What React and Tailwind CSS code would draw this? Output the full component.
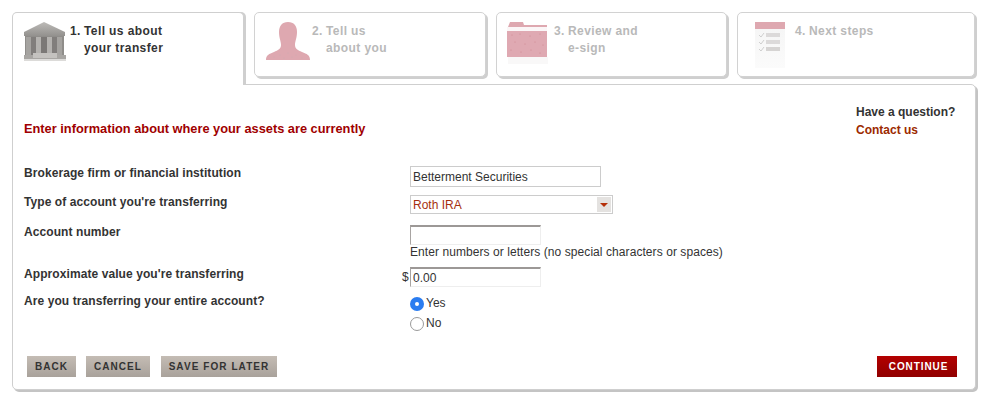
const Bank = () => (
  <svg width="44" height="40" viewBox="0 0 44 40" className="shrink-0 blur-[0.4px]">
    <defs>
      <linearGradient id="roof" x1="0" y1="0" x2="0" y2="1"><stop offset="0" stopColor="#bdbbb8" /><stop offset="1" stopColor="#93918e" /></linearGradient>
    </defs>
    <path d="M1 10 L21 0 L42 10 L42 14 L1 14 Z" fill="url(#roof)" />
    <rect x="2" y="14" width="39" height="22" fill="#8f8d8a" />
    <rect x="3" y="15" width="5" height="18" fill="#a5a3a0" />
    <rect x="13" y="15" width="5" height="18" fill="#b4b2af" />
    <rect x="24" y="15" width="5" height="18" fill="#b4b2af" />
    <rect x="34" y="15" width="5" height="18" fill="#a5a3a0" />
    <rect x="8" y="15" width="5" height="18" fill="#817e7c" />
    <rect x="18" y="15" width="6" height="18" fill="#7b7876" />
    <rect x="29" y="15" width="5" height="18" fill="#817e7c" />
    <rect x="1" y="33" width="42" height="4" fill="#a8a6a3" />
    <rect x="10" y="31" width="24" height="5" fill="#c4c2bf" />
    <rect x="1" y="37" width="42" height="2" fill="#dcdbd9" />
  </svg>
);
const Person = () => (
  <svg width="44" height="40" viewBox="0 0 44 40" className="shrink-0">
    <path d="M22 0 C16 0 13 4 13 10 C13 16 15 19 15 23 C15 27 12 28 8 30 C3 32 0 33 0 38 L44 38 C44 33 41 32 36 30 C32 28 29 27 29 23 C29 19 31 16 31 10 C31 4 28 0 22 0 Z" fill="#dea8b0" />
    <g fill="#c9adb0">
      <circle cx="14" cy="33" r="0.5" /><circle cx="22" cy="31" r="0.5" /><circle cx="30" cy="33" r="0.5" /><circle cx="8" cy="35" r="0.5" />
      <circle cx="18" cy="36" r="0.5" /><circle cx="26" cy="35" r="0.5" /><circle cx="36" cy="36" r="0.5" />
    </g>
  </svg>
);
const Folder = () => (
  <svg width="44" height="44" viewBox="0 0 44 44" className="shrink-0">
    <path d="M2 5 L4 0 L17 0 L18 3 L41 3 L41 5 Z" fill="#dea8b0" />
    <rect x="1" y="5" width="40" height="4" fill="#fbf6f7" />
    <rect x="1" y="9" width="40" height="26" fill="#dfa9b2" />
    <rect x="2" y="35" width="40" height="7" fill="#f9f8f8" />
    <g fill="#c97f88">
      <circle cx="6" cy="13" r="0.5" /><circle cx="14" cy="12" r="0.5" /><circle cx="24" cy="14" r="0.5" /><circle cx="34" cy="12" r="0.5" />
      <circle cx="9" cy="20" r="0.5" /><circle cx="19" cy="22" r="0.5" /><circle cx="29" cy="20" r="0.5" /><circle cx="37" cy="23" r="0.5" />
      <circle cx="5" cy="28" r="0.5" /><circle cx="15" cy="30" r="0.5" /><circle cx="25" cy="28" r="0.5" /><circle cx="34" cy="31" r="0.5" />
    </g>
  </svg>
);
const List = () => (
  <svg width="32" height="46" viewBox="0 0 32 46" className="shrink-0">
    <defs>
      <linearGradient id="page" x1="0" y1="0" x2="0" y2="1"><stop offset="0" stopColor="#f5f5f5" /><stop offset="1" stopColor="#fbfbfb" /></linearGradient>
    </defs>
    <rect x="1" y="0" width="30" height="46" fill="url(#page)" />
    <rect x="1" y="0" width="30" height="7" fill="#dea8b0" />
    <path d="M5 13 l2 2 l3 -4 M5 20 l2 2 l3 -4 M5 27 l2 2 l3 -4" stroke="#cfcfcf" strokeWidth="1" fill="none" />
    <rect x="12" y="11" width="14" height="4" fill="#dcdada" />
    <rect x="12" y="18" width="14" height="4" fill="#dcdada" />
    <rect x="12" y="25" width="14" height="4" fill="#d6d4d3" />
  </svg>
);

const Tab = ({ icon, num, line1, line2, className, gap, pl }) => (
  <div className={`h-[65px] rounded-[5px] border border-[#d2d2d2] bg-white shadow-[2px_2px_0_#cfcfcf] flex items-start pt-[9px] ${pl} ${className}`}>
    {icon}
    <div className={`mt-[1px] text-[12px] leading-[17px] font-bold text-[#b9b9b9] tracking-[0.4px] ${gap}`}>
      <div className="flex"><span className="w-[14px]">{num}.</span><span>{line1}</span></div>
      {line2 && <div className="pl-[14px]">{line2}</div>}
    </div>
  </div>
);

const Label = ({ children }) => (
  <label className="block text-[12px] font-bold leading-[14px] text-[#333] tracking-[0.08px]">{children}</label>
);

const Btn = ({ children, className }) => (
  <button className={`h-[21px] bg-gradient-to-b from-[#c4bcb4] to-[#a9a29b] text-[10px] font-bold tracking-[1.07px] text-[#333] ${className}`}>{children}</button>
);

export default function App() {
  return (
    <div className="w-[988px] h-[400px] bg-white pl-[12px] pt-[12px] font-['Liberation_Sans',Arial,sans-serif] overflow-hidden">
      <div className="flex items-start gap-[10px] h-[72px]">
        <div className="relative z-10 w-[232px] h-[73px] rounded-t-[5px] border border-b-0 border-[#cfcfcf] bg-white shadow-[2px_0_0_#cfcfcf] flex items-start pl-[10px] pt-[9px]">
          <Bank />
          <div className="ml-[3px] mt-[1px] text-[12px] leading-[17px] font-bold text-[#333] tracking-[0.4px]">
            <div className="flex"><span className="w-[14px]">1.</span><span>Tell us about</span></div>
            <div className="pl-[14px]">your transfer</div>
          </div>
        </div>
        <Tab icon={<Person />} num="2" line1="Tell us" line2="about you" className="w-[232px]" pl="pl-[11px]" gap="ml-[2px]" />
        <Tab icon={<Folder />} num="3" line1="Review and" line2="e-sign" className="w-[231px]" pl="pl-[9px]" gap="ml-[4px]" />
        <Tab icon={<List />} num="4" line1="Next steps" className="w-[238px]" pl="pl-[16px]" gap="ml-[9px]" />
      </div>
      <div className="w-[964px] h-[306px] rounded-[5px] rounded-tl-none border border-[#cfcfcf] bg-white shadow-[2px_2px_0_#c4c4c4] pl-[11px] pr-[18px] flex flex-col">
        <div className="flex justify-between h-[70px]">
          <h2 className="mt-[37px] text-[12.8px] font-bold leading-[14px] text-[#a00000]">Enter information about where your assets are currently</h2>
          <div className="mt-[19px] text-[12px] font-bold leading-[16px] w-[101px] whitespace-nowrap">
            <div className="text-[#333]">Have a question?</div>
            <a className="block mt-[2px] text-[#9c2a00]">Contact us</a>
          </div>
        </div>
        <div className="grid grid-cols-[386px_1fr] text-[12px] text-[#333]">
          <div className="pt-[11px] h-[33px]"><Label>Brokerage firm or financial institution</Label></div>
          <div className="pt-[11px] h-[33px]">
            <input readOnly value="Betterment Securities" className="block w-[191px] h-[21px] border border-[#ccc] px-[2px] text-[12px] text-[#333] outline-none" />
          </div>
          <div className="pt-[7px] h-[30px]"><Label>Type of account you're transferring</Label></div>
          <div className="pt-[7px] h-[30px]">
            <div className="w-[203px] h-[19px] border border-[#ccc] flex items-center justify-between pl-[2px] pr-[1px] text-[#a5300f]">
              <span>Roth IRA</span>
              <span className="w-[14px] h-[15px] bg-[#e4e2e0] flex items-center justify-center">
                <span className="w-0 h-0 border-x-[4px] border-x-transparent border-t-[4px] border-t-[#b5300a]"></span>
              </span>
            </div>
          </div>
          <div className="pt-[7px] h-[44px]"><Label>Account number</Label></div>
          <div className="pt-[7px] h-[44px]">
            <input readOnly className="block w-[131px] h-[20px] border border-[#eee] border-t-[#9c9896] border-l-[#a8a4a2] border-t-2 outline-none" />
            <div className="text-[12px] leading-[14px] whitespace-nowrap tracking-[0.07px]">Enter numbers or letters (no special characters or spaces)</div>
          </div>
          <div className="pt-[5px] h-[32px]"><Label>Approximate value you're transferring</Label></div>
          <div className="relative pt-[5px] h-[32px]">
            <span className="absolute left-[-8px] top-[8px] leading-[14px]">$</span>
            <input readOnly value="0.00" className="block w-[131px] h-[20px] border border-[#eee] border-t-[#9c9896] border-l-[#a8a4a2] border-t-2 px-[2px] text-[12px] text-[#333] outline-none" />
          </div>
          <div><Label>Are you transferring your entire account?</Label></div>
          <div>
            <div className="flex items-center h-[20px]">
              <span className="w-[14px] h-[14px] rounded-full bg-[#2a7cf0] flex items-center justify-center"><span className="w-[4px] h-[4px] rounded-full bg-white"></span></span>
              <span className="ml-[2px] leading-[14px] -mt-[3px]">Yes</span>
            </div>
            <div className="flex items-center h-[20px]">
              <span className="w-[14px] h-[14px] rounded-full border border-[#9a9a9a] bg-white"></span>
              <span className="ml-[2px] leading-[14px] -mt-[3px]">No</span>
            </div>
          </div>
        </div>
        <div className="flex mt-[22px] pl-[3px] gap-[10px]">
          <Btn className="w-[49px]">BACK</Btn>
          <Btn className="w-[64px]">CANCEL</Btn>
          <Btn className="w-[116px] ml-[1px]">SAVE FOR LATER</Btn>
          <button className="ml-auto w-[80px] h-[21px] pl-[3px] bg-gradient-to-b from-[#b30000] to-[#900000] text-[10px] font-bold tracking-[0.9px] text-white">CONTINUE</button>
        </div>
      </div>
    </div>
  );
}
